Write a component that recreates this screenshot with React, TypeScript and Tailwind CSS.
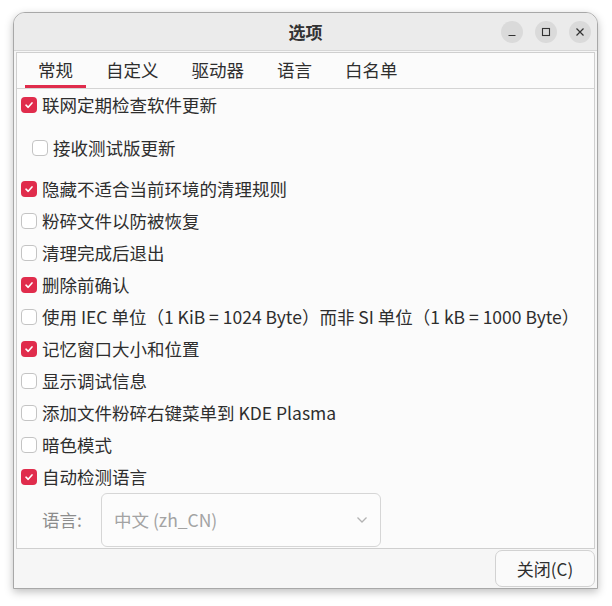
import React from 'react';

const font = { fontFamily: '"Noto Sans CJK SC", "Noto Sans", sans-serif' };

type Item = { label: string; checked: boolean; indent?: boolean; gap?: string };

const items: Item[] = [
  { label: '联网定期检查软件更新', checked: true },
  { label: '接收测试版更新', checked: false, indent: true, gap: 'mt-[11px]' },
  { label: '隐藏不适合当前环境的清理规则', checked: true, gap: 'mt-[9px]' },
  { label: '粉碎文件以防被恢复', checked: false },
  { label: '清理完成后退出', checked: false },
  { label: '删除前确认', checked: true },
  { label: '使用 IEC 单位（1 KiB = 1024 Byte）而非 SI 单位（1 kB = 1000 Byte）', checked: false },
  { label: '记忆窗口大小和位置', checked: true },
  { label: '显示调试信息', checked: false },
  { label: '添加文件粉碎右键菜单到 KDE Plasma', checked: false },
  { label: '暗色模式', checked: false },
  { label: '自动检测语言', checked: true },
];

const tabs = ['常规', '自定义', '驱动器', '语言', '白名单'];

const CheckBox = ({ checked }: { checked: boolean }) =>
  checked ? (
    <span className="flex h-4 w-4 shrink-0 items-center justify-center rounded-[4px] bg-[#e02c4c]">
      <svg width="10" height="10" viewBox="0 0 10 10">
        <path d="M2 5.2 L4.2 7.3 L8 2.9" fill="none" stroke="white" strokeWidth="1.6" strokeLinecap="round" strokeLinejoin="round" />
      </svg>
    </span>
  ) : (
    <span className="h-4 w-4 shrink-0 rounded-[4px] border border-[#c4c4c4] bg-white" />
  );

const CircleBtn = ({ children }: { children: React.ReactNode }) => (
  <span className="flex h-[22px] w-[22px] items-center justify-center rounded-full bg-[#dadada]">{children}</span>
);

export default function App() {
  return (
    <div className="h-[606px] w-[612px] bg-white pl-[13px] pt-[12px]" style={font}>
      <div className="flex h-[577px] w-[585px] flex-col overflow-hidden rounded-t-[12px] border border-[#a8a8a8] bg-[#f6f6f6] shadow-[0_3px_8px_rgba(0,0,0,0.25)]">
        {/* title bar */}
        <div className="grid h-[38px] shrink-0 grid-cols-[1fr_auto_1fr] items-center border-b border-[#d6d6d6] bg-[#ebebeb]">
          <div />
          <div className="text-[17px] font-bold text-[#333]">选项</div>
          <div className="flex justify-end gap-[12px] pr-[6px]">
            <CircleBtn>
              <svg width="10" height="10" viewBox="0 0 10 10">
                <path d="M1.5 8.5 H8.5" stroke="#333" strokeWidth="1.2" />
              </svg>
            </CircleBtn>
            <CircleBtn>
              <svg width="10" height="10" viewBox="0 0 10 10">
                <rect x="1.5" y="1.5" width="7" height="7" fill="none" stroke="#333" strokeWidth="1.1" />
              </svg>
            </CircleBtn>
            <CircleBtn>
              <svg width="10" height="10" viewBox="0 0 10 10">
                <path d="M1.5 1.5 L8.5 8.5 M8.5 1.5 L1.5 8.5" stroke="#333" strokeWidth="1.2" />
              </svg>
            </CircleBtn>
          </div>
        </div>

        {/* notebook */}
        <div className="mx-[2px] mt-[1px] flex h-[497px] flex-col border border-[#cfcfcf] bg-[#fbfbfb]">
          <div className="flex h-[36px] shrink-0 items-stretch gap-[7px] border-b border-[#d4d4d4] pl-[8px]">
            {tabs.map((t, i) => (
              <div
                key={t}
                className={`flex items-center px-[13px] pt-[2px] text-[17.5px] text-[#2e2e2e] border-b-[3px] ${i === 0 ? 'border-[#e02c4c]' : 'border-transparent'}`}
              >
                {t}
              </div>
            ))}
          </div>

          <div className="flex flex-col pl-[4px]">
            {items.map((it) => (
              <div
                key={it.label}
                className={`flex h-[32px] items-center gap-[5px] text-[17.5px] text-[#2e2e2e] ${it.gap ?? ''} ${it.indent ? 'pl-[11px]' : ''}`}
              >
                <CheckBox checked={it.checked} />
                <span className="whitespace-nowrap">{it.label}</span>
              </div>
            ))}

            <div className="flex items-center pl-[21px] -mb-[1px]">
              <span className="w-[59px] text-[17.5px] text-[#8c8c8c]">语言:</span>
              <div className="flex h-[54px] w-[280px] items-center justify-between rounded-[6px] border border-[#d6d6d6] bg-[#fcfcfc] pl-[12px] pr-[12px]">
                <span className="text-[17.5px] text-[#a3a3a3]">中文 (zh_CN)</span>
                <svg width="12" height="8" viewBox="0 0 12 8">
                  <path d="M1.5 1.5 L6 6 L10.5 1.5" fill="none" stroke="#b3b3b3" strokeWidth="1.3" />
                </svg>
              </div>
            </div>
          </div>
        </div>

        {/* footer */}
        <div className="flex justify-end pr-[2px] pt-[1px]">
          <button className="flex h-[37px] w-[100px] items-center justify-center rounded-[7px] border border-[#d2d2d2] bg-[#fafafa] text-[17px] text-[#2e2e2e]">
            关闭(C)
          </button>
        </div>
      </div>
    </div>
  );
}
